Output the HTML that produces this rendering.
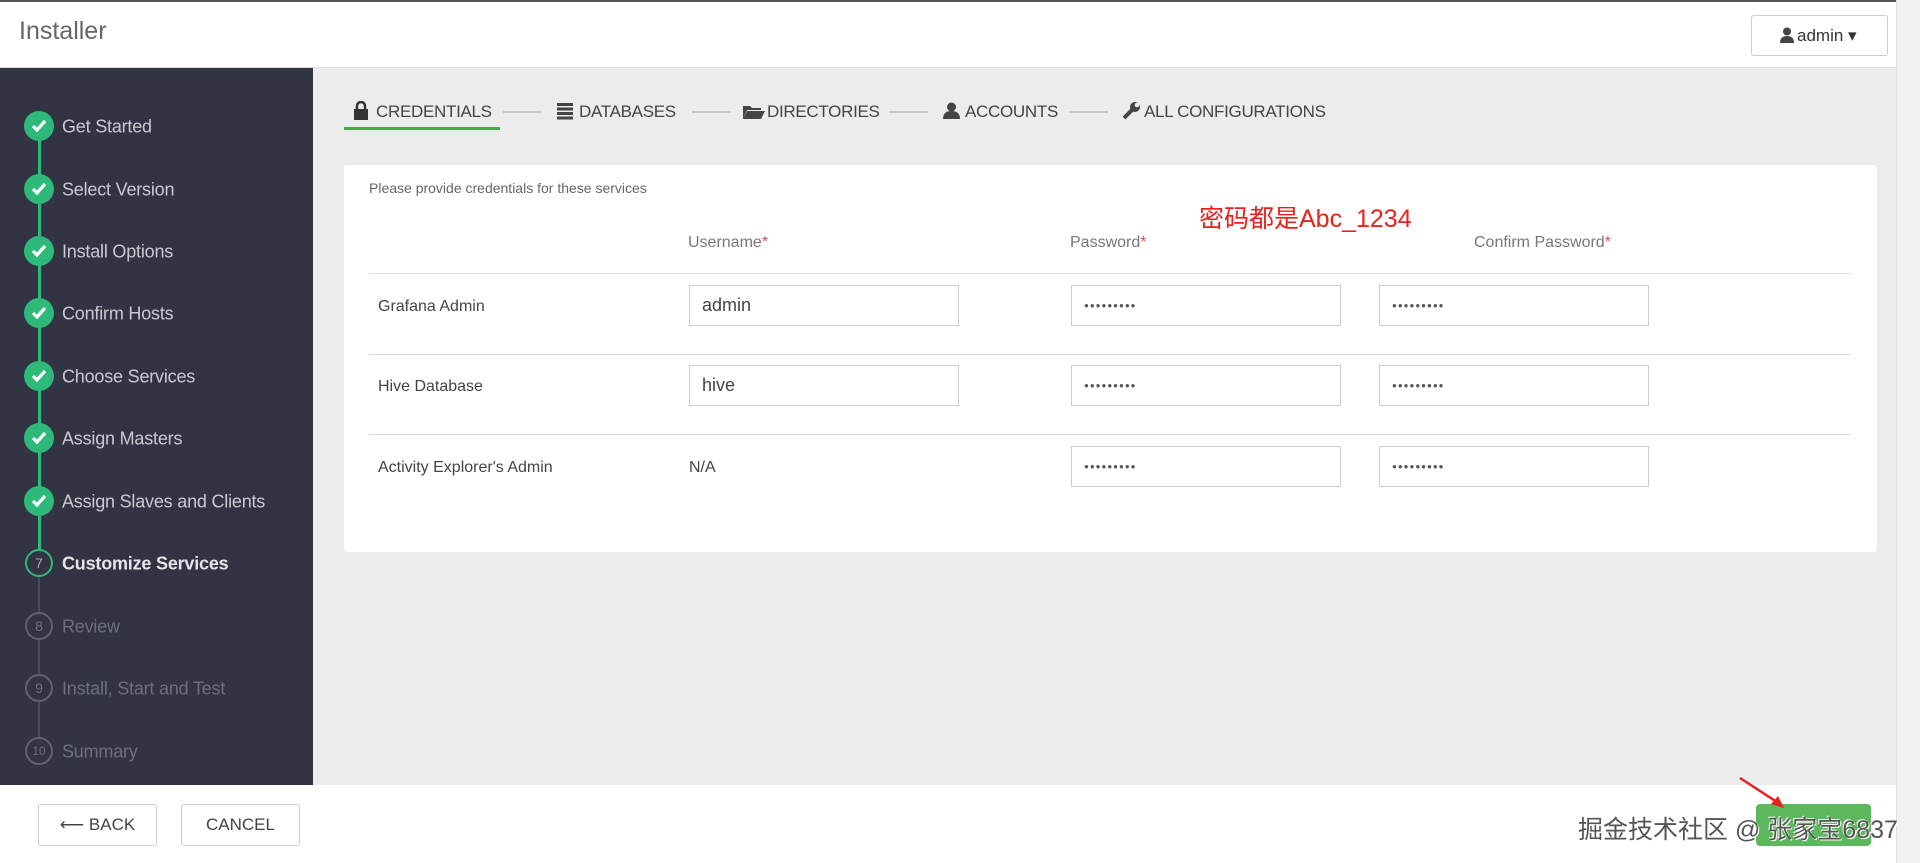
<!DOCTYPE html>
<html><head><meta charset="utf-8">
<style>
*{box-sizing:border-box;margin:0;padding:0}
body{width:1920px;height:863px;overflow:hidden;background:#ececec;font-family:"Liberation Sans","Noto Sans CJK SC",sans-serif;position:relative;color:#333}
.a{position:absolute}
#hdr{left:0;top:0;width:1896px;height:68px;background:#fff;border-top:2px solid #555;border-bottom:1px solid #ddd}
#scroll{left:1896px;top:0;width:24px;height:863px;background:#f1f1f1;border-left:1px solid #e2e2e2}
#side{left:0;top:68px;width:313px;height:717px;background:#323443}
#foot{left:0;top:785px;width:1896px;height:78px;background:#fff}
.step{position:absolute;left:62px;font-size:18px;color:#c9cad0;transform:translateY(-50%);letter-spacing:-0.2px}
.dot{position:absolute;left:24px;width:30px;height:30px;border-radius:50%;background:#2eb87a;transform:translateY(-50%)}
.dot svg{position:absolute;left:7px;top:8px}
.num{position:absolute;left:25px;width:28px;height:28px;border-radius:50%;border:2px solid #5f6170;transform:translateY(-50%);color:#6d6f7d;font-size:14px;text-align:center;line-height:24px}
.tab{position:absolute;top:102px;font-size:17px;color:#444;line-height:20px;letter-spacing:-0.3px}
.ln{position:absolute;top:111px;height:2px;background:#c8c8c8}
#card{left:344px;top:165px;width:1533px;height:387px;background:#fff;border-radius:4px}
.hl{position:absolute;left:369px;width:1482px;height:1px;background:#ddd}
.lab{position:absolute;left:378px;font-size:16px;color:#444;transform:translateY(-50%)}
.th{position:absolute;top:234px;font-size:16px;color:#777}
.th b{color:#d9534f;font-weight:normal}
.inp{position:absolute;height:41px;width:270px;border:1px solid #ccc;background:#fff;font-size:18px;color:#444;padding-left:12px;line-height:39px}
.pw{font-size:8px;color:#555;letter-spacing:1px}
.btn{position:absolute;top:804px;height:42px;width:119px;border:1px solid #ccc;border-radius:3px;background:#fff;font-size:17px;color:#444;text-align:center;line-height:40px}
</style></head><body>
<div class="a" id="hdr"></div>
<div class="a" style="left:19px;top:17px;font-size:25px;color:#666">Installer</div>
<div class="a" style="left:1751px;top:15px;width:137px;height:41px;border:1px solid #ccc;border-radius:3px;background:#fff;font-size:17px;line-height:39px;color:#333;padding-left:26px">
<svg class="a" style="left:28px;top:11px" width="14" height="16" viewBox="0 0 14 16"><circle cx="7" cy="4.5" r="4" fill="#444"/><path d="M0 16 Q0 9 7 9 Q14 9 14 16Z" fill="#444"/></svg>
<span style="margin-left:19px">admin ▾</span></div>
<div class="a" id="scroll"></div>
<div class="a" id="side"></div>
<div class="a" style="left:38px;top:126px;width:3px;height:437px;background:#2eb87a"></div>
<div class="a" style="left:38px;top:563px;width:2px;height:188px;background:#4a4c5a"></div>

<div class="dot" style="top:126px"><svg width="16" height="14"><path d="M2 7 L6 11 L14 2" stroke="#fff" stroke-width="3.2" fill="none"/></svg></div><div class="step" style="top:127px">Get Started</div>
<div class="dot" style="top:189px"><svg width="16" height="14"><path d="M2 7 L6 11 L14 2" stroke="#fff" stroke-width="3.2" fill="none"/></svg></div><div class="step" style="top:190px">Select Version</div>
<div class="dot" style="top:251px"><svg width="16" height="14"><path d="M2 7 L6 11 L14 2" stroke="#fff" stroke-width="3.2" fill="none"/></svg></div><div class="step" style="top:252px">Install Options</div>
<div class="dot" style="top:313px"><svg width="16" height="14"><path d="M2 7 L6 11 L14 2" stroke="#fff" stroke-width="3.2" fill="none"/></svg></div><div class="step" style="top:314px">Confirm Hosts</div>
<div class="dot" style="top:376px"><svg width="16" height="14"><path d="M2 7 L6 11 L14 2" stroke="#fff" stroke-width="3.2" fill="none"/></svg></div><div class="step" style="top:377px">Choose Services</div>
<div class="dot" style="top:438px"><svg width="16" height="14"><path d="M2 7 L6 11 L14 2" stroke="#fff" stroke-width="3.2" fill="none"/></svg></div><div class="step" style="top:439px">Assign Masters</div>
<div class="dot" style="top:501px"><svg width="16" height="14"><path d="M2 7 L6 11 L14 2" stroke="#fff" stroke-width="3.2" fill="none"/></svg></div><div class="step" style="top:502px">Assign Slaves and Clients</div>
<div class="num" style="top:563px;border-color:#2eb87a;color:#aaa;background:#323443">7</div><div class="step" style="top:564px;color:#e4e5ea;font-weight:bold">Customize Services</div>
<div class="num" style="top:626px;background:#323443">8</div><div class="step" style="top:627px;color:#6d6f7d">Review</div>
<div class="num" style="top:688px;background:#323443">9</div><div class="step" style="top:689px;color:#6d6f7d">Install, Start and Test</div>
<div class="num" style="top:751px;background:#323443;font-size:12px">10</div><div class="step" style="top:752px;color:#6d6f7d">Summary</div>

<svg class="a" style="left:353px;top:101px" width="16" height="19"><rect x="1" y="8" width="14" height="11" fill="#333"/><path d="M4 9 V5 a4 4 0 0 1 8 0 V9" stroke="#333" stroke-width="2.5" fill="none"/></svg>
<div class="tab" style="left:376px">CREDENTIALS</div>
<div class="a" style="left:344px;top:127px;width:156px;height:3px;background:#3fae49"></div>
<div class="ln" style="left:503px;width:38px"></div>
<svg class="a" style="left:557px;top:103px" width="16" height="17"><rect y="0" width="16" height="3" fill="#444"/><rect y="4.5" width="16" height="3" fill="#444"/><rect y="9" width="16" height="3" fill="#444"/><rect y="13.5" width="16" height="3" fill="#444"/></svg>
<div class="tab" style="left:579px">DATABASES</div>
<div class="ln" style="left:692px;width:39px"></div>
<svg class="a" style="left:743px;top:104px" width="22" height="15"><path d="M0 2 H7 L9 4 H18 V6 H4 L0 15Z" fill="#444"/><path d="M4 7 H22 L18 15 H0Z" fill="#444"/></svg>
<div class="tab" style="left:767px">DIRECTORIES</div>
<div class="ln" style="left:889px;width:39px"></div>
<svg class="a" style="left:943px;top:102px" width="17" height="17"><circle cx="8.5" cy="5" r="4.5" fill="#444"/><path d="M0 17 Q0 9 8.5 9 Q17 9 17 17Z" fill="#444"/></svg>
<div class="tab" style="left:965px">ACCOUNTS</div>
<div class="ln" style="left:1069px;width:39px"></div>
<svg class="a" style="left:1122px;top:102px" width="18" height="18"><path d="M2 16 L10 8" stroke="#444" stroke-width="4"/><circle cx="13" cy="5" r="5" fill="#444"/><circle cx="15" cy="3" r="2.3" fill="#ececec"/></svg>
<div class="tab" style="left:1144px">ALL CONFIGURATIONS</div>

<div class="a" id="card"></div>
<div class="a" style="left:369px;top:180px;font-size:14px;color:#666">Please provide credentials for these services</div>
<div class="a" style="left:1199px;top:199px;font-size:25px;color:#e8211c">密码都是Abc_1234</div>
<div class="th" style="left:688px">Username<b>*</b></div>
<div class="th" style="left:1070px">Password<b>*</b></div>
<div class="th" style="left:1474px">Confirm Password<b>*</b></div>
<div class="hl" style="top:273px"></div>
<div class="hl" style="top:354px"></div>
<div class="hl" style="top:434px"></div>
<div class="lab" style="top:307px">Grafana Admin</div>
<div class="lab" style="top:387px">Hive Database</div>
<div class="lab" style="top:468px">Activity Explorer's Admin</div>
<div class="inp" style="left:689px;top:285px">admin</div>
<div class="inp" style="left:689px;top:365px">hive</div>
<div class="a" style="left:689px;top:459px;font-size:16px;color:#444">N/A</div>
<div class="inp pw" style="left:1071px;top:285px">●●●●●●●●●</div>
<div class="inp pw" style="left:1379px;top:285px">●●●●●●●●●</div>
<div class="inp pw" style="left:1071px;top:365px">●●●●●●●●●</div>
<div class="inp pw" style="left:1379px;top:365px">●●●●●●●●●</div>
<div class="inp pw" style="left:1071px;top:446px">●●●●●●●●●</div>
<div class="inp pw" style="left:1379px;top:446px">●●●●●●●●●</div>

<div class="a" id="foot"></div>
<div class="btn" style="left:38px">⟵ BACK</div>
<div class="btn" style="left:181px">CANCEL</div>
<div class="a" style="left:1756px;top:804px;width:115px;height:42px;background:#5cb85c;border-radius:4px"></div>
<svg class="a" style="left:1738px;top:776px" width="50" height="36"><path d="M2 2 L42 28" stroke="#e8211c" stroke-width="2.5"/><path d="M46 32 L33 28 L40 20Z" fill="#e8211c"/></svg>
<div class="a" style="left:1578px;top:810px;font-size:25px;color:#555;text-shadow:1px 1px 0 #fff,-1px -1px 0 #fff;white-space:nowrap">掘金技术社区 @ 张家宝6837</div>
</body></html>
